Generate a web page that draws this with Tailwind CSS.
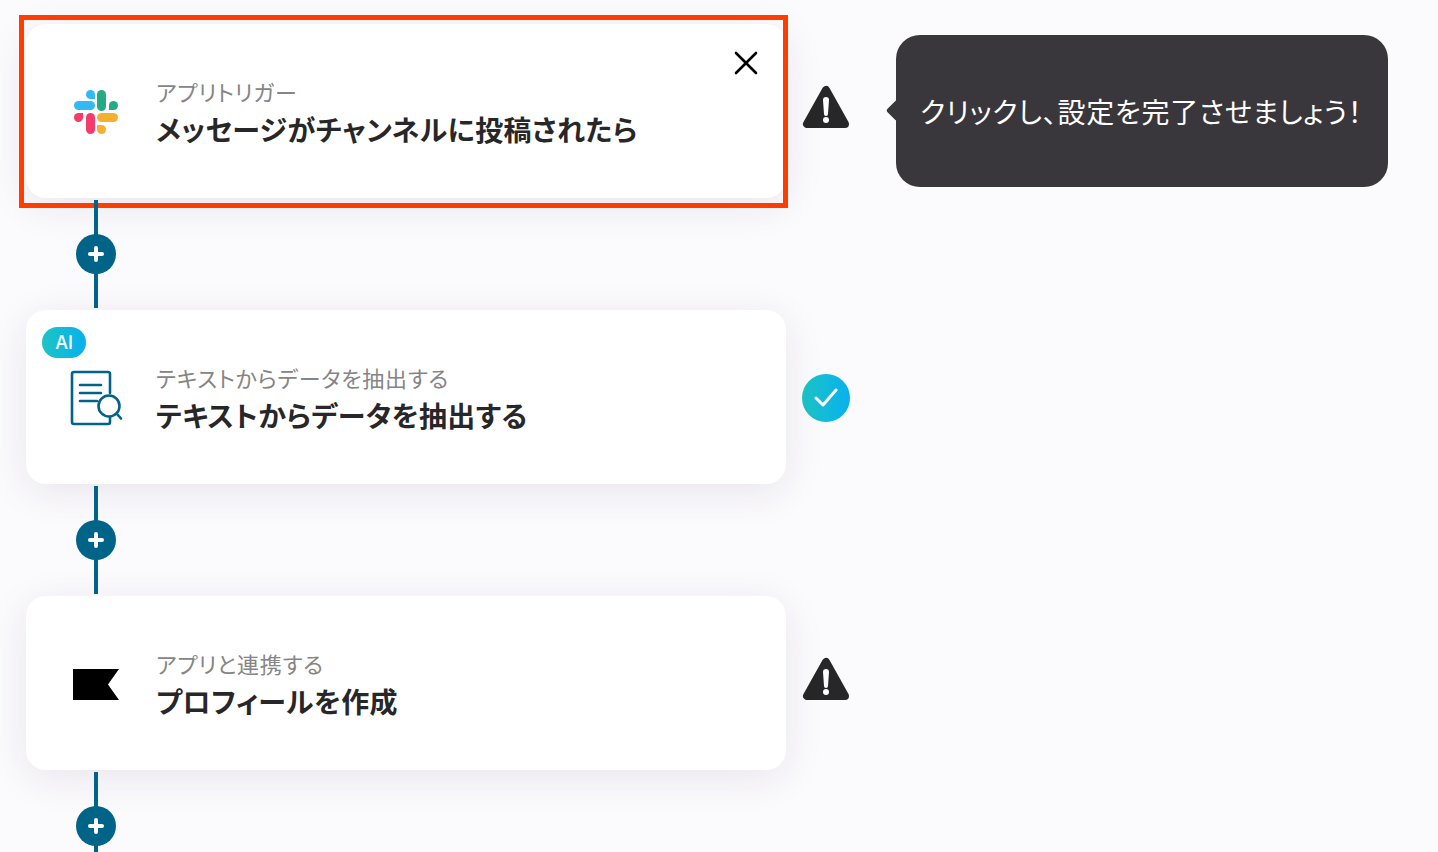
<!DOCTYPE html>
<html lang="ja">
<head>
    <meta charset="UTF-8">
    <title>フロー設定</title>
    <script src="https://cdn.jsdelivr.net/npm/@tailwindcss/browser@4"></script>
</head>
<body class="bg-[#fbfafd] h-[852px] overflow-hidden font-['Noto_Sans_CJK_JP','Noto_Sans',sans-serif] [font-feature-settings:'palt']">
    <div class="pl-[26px] pt-[24px] flex flex-col">

        <!-- Step 1 -->
        <div class="flex items-start">
            <div class="relative w-[760px] h-[174px] bg-white rounded-[20px] shadow-[0_8px_40px_rgba(40,30,60,0.09)] flex items-center pl-[130px]">
                <svg class="absolute left-[47px] top-[65px]" width="46" height="46" viewBox="0 0 46 46">
                    <path d="M17.500 1a4.500 4.500 0 0 0 0 9H22V5.500A4.500 4.500 0 0 0 17.500 1z" fill="#33b8f8"/>
                    <rect x="1" y="12" width="21" height="9" rx="4.500" fill="#33b8f8"/>
                    <rect x="24" y="1" width="9" height="21" rx="4.500" fill="#26a985"/>
                    <path d="M45 16.500a4.500 4.500 0 0 0-9 0V21h4.500a4.500 4.500 0 0 0 4.500-4.500z" fill="#26a985"/>
                    <path d="M1 28.500a4.500 4.500 0 0 0 9 0V24H5.500A4.500 4.500 0 0 0 1 28.500z" fill="#f53b6b"/>
                    <rect x="13" y="24" width="9" height="21" rx="4.500" fill="#f53b6b"/>
                    <rect x="24" y="24" width="21" height="9" rx="4.500" fill="#f6b02f"/>
                    <path d="M28.500 45a4.500 4.500 0 0 0 0-9H24v4.500A4.500 4.500 0 0 0 28.500 45z" fill="#f6b02f"/>
                </svg>
                <div class="flex flex-col">
                    <p class="text-[22px] leading-[28px] text-[#858585] tracking-[0.75px]">アプリトリガー</p>
                    <p class="mt-[8px] text-[28px] leading-[32px] font-semibold text-[#27272a] tracking-[0.42px]">メッセージがチャンネルに投稿されたら</p>
                </div>
                <svg class="absolute right-[28px] top-[27px]" width="24" height="24" viewBox="0 0 24 24" fill="none" stroke="#000" stroke-width="2.600" stroke-linecap="round">
                    <path d="M2 2l20 20M22 2L2 22"/>
                </svg>
                <!-- selected outline -->
                <div class="absolute -left-[7px] -top-[9px] w-[769px] h-[193px] border-[5px] border-[#ff3d00]"></div>
            </div>
            <svg class="ml-[16px] mt-[60px]" width="48" height="46" viewBox="0 0 48 46">
                <path d="M24 6L5 40H43z" fill="#27272a" stroke="#27272a" stroke-width="8" stroke-linejoin="round"/>
                <path d="M21 16a3 3 0 0 1 6 0l-1 14a2 2 0 0 1-4 0z" fill="#fff"/>
                <circle cx="24" cy="36" r="3" fill="#fff"/>
            </svg>
            <div class="relative ml-[46px] mt-[11px] w-[492px] h-[152px] bg-[#39373b] rounded-[24px] flex items-center pl-[24px]">
                <div class="absolute -left-[7.500px] top-[68px] w-[15px] h-[15px] rotate-45 bg-[#39373b] rounded-[2px]"></div>
                <p class="relative text-[28px] leading-[36px] text-white whitespace-nowrap tracking-[0.75px]">クリックし、設定を完了させましょう！</p>
            </div>
        </div>

        <!-- connector -->
        <div class="relative w-[140px] h-[112px] flex flex-col items-center pt-[2px] pb-[2px]">
            <div class="w-[4px] h-full bg-[#006488]"></div>
            <div class="absolute top-[36px] w-[40px] h-[40px] rounded-full bg-[#006488] flex items-center justify-center">
                <svg width="18" height="18" viewBox="0 0 18 18" stroke="#fff" stroke-width="4" stroke-linecap="round"><path d="M9 3v12M3 9h12"/></svg>
            </div>
        </div>

        <!-- Step 2 -->
        <div class="flex items-start">
            <div class="relative w-[760px] h-[174px] bg-white rounded-[20px] shadow-[0_8px_40px_rgba(40,30,60,0.09)] flex items-center pl-[130px]">
                <div class="absolute left-[16px] top-[17px] w-[44px] h-[31px] rounded-full bg-gradient-to-r from-[#1ec4c4] to-[#0ab0ee] flex items-center justify-center text-white text-[18px] font-medium font-['Inter',sans-serif]">AI</div>
                <svg class="absolute left-[44px] top-[60px]" width="54" height="56" viewBox="0 0 54 56" fill="none" stroke="#006488" stroke-width="2.600" stroke-linecap="round" stroke-linejoin="round">
                    <path d="M40 23V4a2 2 0 0 0-2-2H4a2 2 0 0 0-2 2v48a2 2 0 0 0 2 2h34a2 2 0 0 0 2-2v-5"/>
                    <path d="M10 15h21M10 23h21M10 31h17"/>
                    <circle cx="39" cy="36" r="10.500"/>
                    <path d="M47 44l4 4.500"/>
                </svg>
                <div class="flex flex-col">
                    <p class="text-[22px] leading-[28px] text-[#858585] tracking-[0.75px]">テキストからデータを抽出する</p>
                    <p class="mt-[8px] text-[28px] leading-[32px] font-semibold text-[#27272a] tracking-[0.42px]">テキストからデータを抽出する</p>
                </div>
            </div>
            <div class="ml-[16px] mt-[64px] w-[48px] h-[48px] rounded-full bg-gradient-to-r from-[#1ec4c4] to-[#0ab0ee] flex items-center justify-center">
                <svg width="24" height="20" viewBox="0 0 24 20" fill="none" stroke="#fff" stroke-width="3" stroke-linecap="round" stroke-linejoin="round"><path d="M2 10l7 7L22 2"/></svg>
            </div>
        </div>

        <!-- connector -->
        <div class="relative w-[140px] h-[112px] flex flex-col items-center pt-[2px] pb-[2px]">
            <div class="w-[4px] h-full bg-[#006488]"></div>
            <div class="absolute top-[36px] w-[40px] h-[40px] rounded-full bg-[#006488] flex items-center justify-center">
                <svg width="18" height="18" viewBox="0 0 18 18" stroke="#fff" stroke-width="4" stroke-linecap="round"><path d="M9 3v12M3 9h12"/></svg>
            </div>
        </div>

        <!-- Step 3 -->
        <div class="flex items-start">
            <div class="relative w-[760px] h-[174px] bg-white rounded-[20px] shadow-[0_8px_40px_rgba(40,30,60,0.09)] flex items-center pl-[130px]">
                <svg class="absolute left-[46px] top-[72px]" width="48" height="33" viewBox="0 0 48 33"><path d="M1 1h46l-11 15.500L47 32H1z" fill="#000"/></svg>
                <div class="flex flex-col">
                    <p class="text-[22px] leading-[28px] text-[#858585] tracking-[0.75px]">アプリと連携する</p>
                    <p class="mt-[8px] text-[28px] leading-[32px] font-semibold text-[#27272a] tracking-[0.42px]">プロフィールを作成</p>
                </div>
            </div>
            <svg class="ml-[16px] mt-[60px]" width="48" height="46" viewBox="0 0 48 46">
                <path d="M24 6L5 40H43z" fill="#27272a" stroke="#27272a" stroke-width="8" stroke-linejoin="round"/>
                <path d="M21 16a3 3 0 0 1 6 0l-1 14a2 2 0 0 1-4 0z" fill="#fff"/>
                <circle cx="24" cy="36" r="3" fill="#fff"/>
            </svg>
        </div>

        <!-- connector -->
        <div class="relative w-[140px] h-[112px] flex flex-col items-center pt-[2px] pb-[2px]">
            <div class="w-[4px] h-full bg-[#006488]"></div>
            <div class="absolute top-[36px] w-[40px] h-[40px] rounded-full bg-[#006488] flex items-center justify-center">
                <svg width="18" height="18" viewBox="0 0 18 18" stroke="#fff" stroke-width="4" stroke-linecap="round"><path d="M9 3v12M3 9h12"/></svg>
            </div>
        </div>
    </div>
</body>
</html>
